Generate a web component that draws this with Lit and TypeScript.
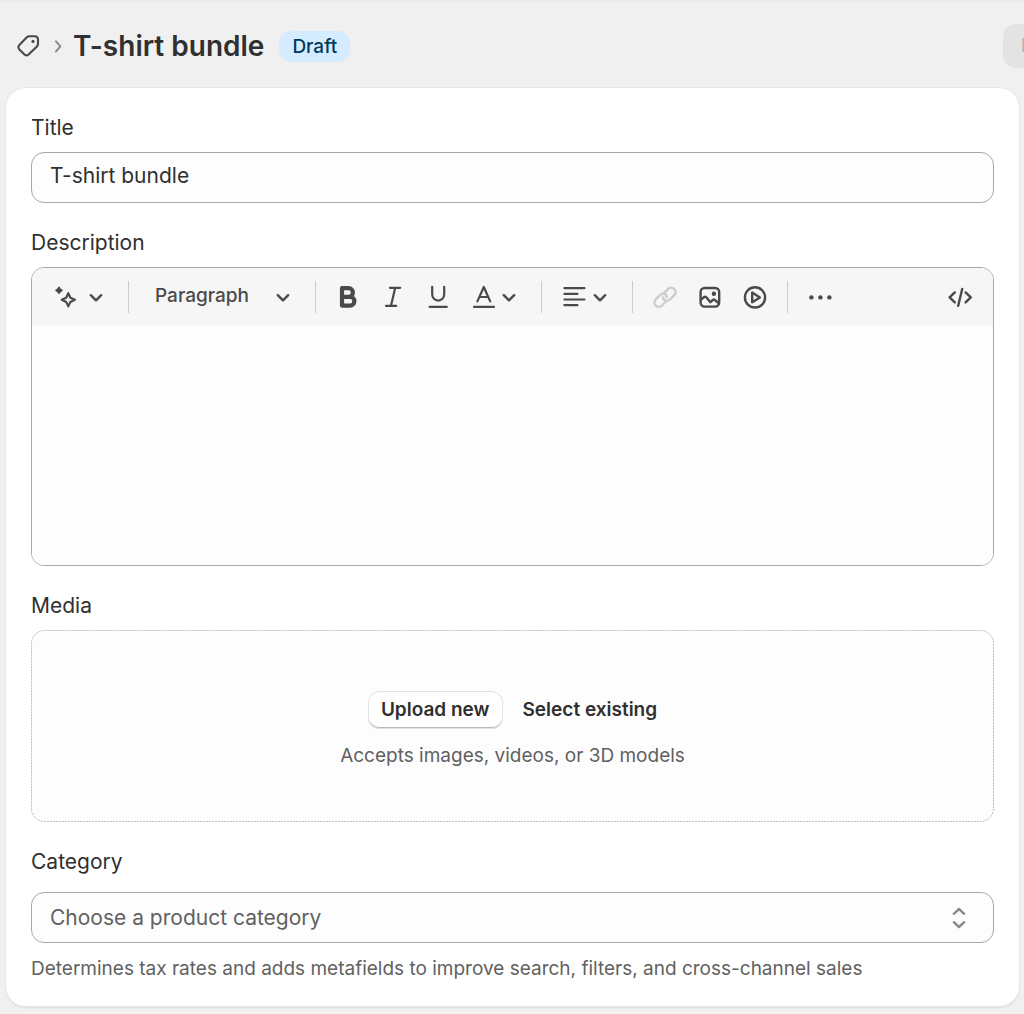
import { LitElement, html, css, svg } from "lit";
import { customElement, property } from "lit/decorators.js";

const icons: Record<string, unknown> = {
  sparkle: svg`
    <path d="M1 2.4L2.2 4.1L4 5.3L2.2 6.5L1 8.2L-0.2 6.5L-2 5.3L-0.2 4.1Z" fill="currentColor" stroke-width="1.6"/>
    <path d="M10.3 8.2L12.4 12.7L16.9 14.8L12.4 16.9L10.3 21.4L8.2 16.9L3.7 14.8L8.2 12.7Z" stroke-width="2.2"/>`,
  bold: svg`<path d="M6 3.2H12.6A4.3 4.3 0 0 1 12.6 11.8H6ZM6 11.8H14A4.4 4.4 0 0 1 14 20.6H6Z" stroke-width="4.2"/>`,
  italic: svg`<path d="M9 2.8H19.2M5 20.8H15.2M14.2 2.8L10 20.8" stroke-width="2.2"/>`,
  underline: svg`<path d="M6.2 1.8V9.6A6 6 0 0 0 18.2 9.6V1.8M3.6 21.8H20.8" stroke-width="2.2"/>`,
  color: svg`<path d="M6.4 16.4L12.8 2L19.2 16.4M8.6 12H17M3 21.8H23" stroke-width="2.2"/>`,
  align: svg`<path d="M2.4 3.2H22.4M2.4 8.9H15.4M2.4 14.5H22.4M2.4 20.2H15.4" stroke-width="2.2"/>`,
  link: svg`<path d="M10.2 8.9L15 4.1A4.3 4.3 0 0 1 21.3 10.2L17 14.5A4.4 4.4 0 0 1 10.8 14.5A2.6 2.6 0 0 1 10.2 12.4M13.8 15.7L9 20.5A4.3 4.3 0 0 1 2.7 14.4L7 10.1A4.4 4.4 0 0 1 13.2 10.1A2.6 2.6 0 0 1 13.8 12.2" stroke-width="2.4"/>`,
  image: svg`
    <rect x="2.6" y="3" width="18.6" height="18.6" rx="4"/>
    <circle cx="15.9" cy="8.8" r="2.2" fill="currentColor" stroke="none"/>
    <path d="M3 14.6L6.2 12Q7.3 11.2 8.3 12.3L12.4 17.2L14.8 15Q15.8 14.2 16.8 15L20.6 18"/>`,
  play: svg`
    <circle cx="12" cy="12.4" r="10.1"/>
    <path d="M9.2 7.6V17.2L16.9 12.4Z"/>`,
  dots: svg`<g fill="currentColor" stroke="none"><circle cx="3.4" cy="12.4" r="2.2"/><circle cx="12.4" cy="12.4" r="2.2"/><circle cx="21.4" cy="12.4" r="2.2"/></g>`,
  code: svg`<path d="M5.8 7.4L0.6 12.4L5.8 17.4M16.6 7.4L21.8 12.4L16.6 17.4M13.2 4L9.2 20.8" stroke-width="2.4"/>`,
};

const chevron = html`<svg class="chev" viewBox="0 0 16 24" aria-hidden="true"><path d="M2.8 10.2L8 15.4L13.2 10.2"/></svg>`;

@customElement("tool-button")
export class ToolButton extends LitElement {
  @property() icon = "";
  @property() label = "";
  @property({ type: Boolean }) menu = false;
  @property({ type: Boolean }) disabled = false;

  static styles = css`
    :host { display: block; flex: none; }
    .btn {
      display: flex; align-items: center; gap: 6px;
      padding: 0; border: 0; background: none; color: #4a4a4a; cursor: pointer;
    }
    .btn:disabled { color: #cccccc; cursor: default; }
    svg {
      display: block; width: 24px; height: 24px; overflow: visible;
      fill: none; stroke: currentColor; stroke-width: 2.4;
      stroke-linecap: round; stroke-linejoin: round;
    }
    .chev { width: 16px; }
  `;

  render() {
    return html`<button class="btn" type="button" aria-label=${this.label} ?disabled=${this.disabled}>
      <svg viewBox="0 0 24 24" aria-hidden="true">${icons[this.icon]}</svg>${this.menu ? chevron : ""}
    </button>`;
  }
}

@customElement("app-root")
export class AppRoot extends LitElement {
  static styles = css`
    :host {
      display: block; box-sizing: border-box; min-height: 100vh;
      padding: 0 5px 8px 6px; overflow: hidden;
      background: #f0f0f0; color: #303030;
      border-top: 2px solid #ebebeb;
      font: 400 21px/28px Inter, "Liberation Sans", sans-serif;
    }
    *, *::before { box-sizing: border-box; }
    button, input, select, textarea { font: inherit; color: inherit; margin: 0; }
    svg { display: block; flex: none; fill: none; stroke: currentColor; stroke-linecap: round; stroke-linejoin: round; }

    .head { display: flex; align-items: center; height: 86px; padding: 2px 0 0 10px; }
    .crumb { color: #4a4a4a; }
    .crumb svg { width: 24px; height: 24px; }
    .sep { width: 8px; height: 16px; margin: 0 11px 0 14px; color: #8a8a8a; }
    h1 { margin: 0; font-size: 28px; line-height: 36px; font-weight: 600; white-space: nowrap; }
    .badge {
      margin-left: 15px; padding: 0 13px; border-radius: 12px;
      background: #d5ebff; color: #003a5a;
      font-size: 19px; line-height: 31px; font-weight: 500;
    }
    .actions { flex: none; width: 16px; margin-left: auto; }
    .action {
      display: block; height: 44px; padding: 0 18px; border: 0; border-radius: 13px; white-space: nowrap;
      background: #e3e3e3; color: #b5b5b5; font-size: 19px; font-weight: 600;
    }

    .card {
      display: flex; flex-direction: column; gap: 26px;
      padding: 26px 25px 23px; border-radius: 20px; background: #fff;
      box-shadow: 0 0 0 1px #e6e6e6, 0 2px 2px #dcdcdc;
    }
    .field { display: flex; flex-direction: column; gap: 10px; }
    .box { width: 100%; border: 1px solid #a8a8a8; border-radius: 13px; background: #fdfdfd; }
    .text { height: 51px; padding: 0 18px 4px; }

    .editor { display: flex; flex-direction: column; overflow: hidden; }
    .bar { display: flex; align-items: center; height: 58px; background: #f6f6f6; color: #4a4a4a; }
    .group { display: flex; align-items: center; gap: 21px; padding: 0 24px 0 20px; }
    .group.first { padding-left: 26px; }
    .group + .group { border-left: 1px solid #cccccc; height: 32px; }
    .group.end, .group.last { padding-right: 20px; }
    .group + .last { margin-left: auto; border-left: 0; }
    .pick { position: relative; display: flex; align-items: center; margin-left: 6px; }
    .pick select {
      appearance: none; border: 0; background: none; padding: 0 42px 2px 0;
      font-size: 19px; line-height: 28px; font-weight: 500;
    }
    .pick svg { position: absolute; right: 0; width: 16px; height: 24px; stroke-width: 2.4; pointer-events: none; }
    textarea { display: block; width: 100%; height: 239px; padding: 16px 18px; border: 0; resize: none; background: #fdfdfd; outline: none; }

    .drop {
      position: relative; display: flex; flex-direction: column; align-items: center;
      padding: 61px 20px 52px; gap: 13px; border-radius: 13px; background: #fdfdfd;
    }
    .outline { position: absolute; inset: 0; width: 100%; height: 100%; color: #bcbcbc; }
    .outline rect { width: calc(100% - 1px); height: calc(100% - 1px); }
    .row { display: flex; align-items: center; gap: 20px; }
    .btn { height: 38px; padding: 0; border: 0; border-radius: 12px; background: none; font-size: 19px; font-weight: 600; }
    .raised { padding: 0 13px; background: #fff; box-shadow: inset 0 0 0 1px #e3e3e3, inset 0 -2px 0 #b8b8b8; }
    .hint { margin: 0; color: #616161; font-size: 19px; line-height: 28px; }

    .wide { gap: 16px; }
    .combo { position: relative; }
    .combo select { display: block; appearance: none; height: 51px; padding: 0 60px 0 18px; color: #616161; }
    .combo svg { position: absolute; right: 27px; top: 14px; width: 16px; height: 24px; color: #8a8a8a; stroke-width: 2.4; pointer-events: none; }
    .note { margin-top: -4px; }
  `;

  render() {
    return html`
      <header class="head">
        <a class="crumb" href="#products" aria-label="Products">
          <svg viewBox="0 0 24 24" stroke-width="2.1" aria-hidden="true">
            <path d="M13.4 2.2H18.6Q22 2.2 22 5.6V9.6Q22 11.4 20.7 12.7L12.6 20.5Q10.4 22.4 8.2 20.3L3.4 15.4Q1.4 13.1 3.4 10.9L10.8 3.3Q11.9 2.2 13.4 2.2Z"/>
            <circle cx="17" cy="7.4" r="1.6" fill="currentColor" stroke="none"/>
          </svg>
        </a>
        <svg class="sep" viewBox="0 0 8 16" stroke-width="2" aria-hidden="true"><path d="M2 3.4L6.4 8.4L2 13.4"/></svg>
        <h1>T-shirt bundle</h1>
        <span class="badge">Draft</span>
        <div class="actions"><button class="action" type="button" disabled>Duplicate</button></div>
      </header>

      <main class="card">
        <div class="field">
          <label for="title">Title</label>
          <input class="box text" id="title" type="text" .value=${"T-shirt bundle"} />
        </div>

        <div class="field">
          <label for="description">Description</label>
          <div class="box editor">
            <div class="bar" role="toolbar" aria-label="Formatting">
              <div class="group first"><tool-button icon="sparkle" label="Generate text" menu></tool-button></div>
              <div class="group">
                <div class="pick">
                  <select aria-label="Text style"><option>Paragraph</option></select>
                  <svg viewBox="0 0 16 24" aria-hidden="true"><path d="M2.8 10.2L8 15.4L13.2 10.2"/></svg>
                </div>
              </div>
              <div class="group">
                <tool-button icon="bold" label="Bold"></tool-button>
                <tool-button icon="italic" label="Italic"></tool-button>
                <tool-button icon="underline" label="Underline"></tool-button>
                <tool-button icon="color" label="Text color" menu></tool-button>
              </div>
              <div class="group"><tool-button icon="align" label="Alignment" menu></tool-button></div>
              <div class="group end">
                <tool-button icon="link" label="Insert link" disabled></tool-button>
                <tool-button icon="image" label="Insert image"></tool-button>
                <tool-button icon="play" label="Insert video"></tool-button>
              </div>
              <div class="group"><tool-button icon="dots" label="More"></tool-button></div>
              <div class="group last"><tool-button icon="code" label="Show HTML"></tool-button></div>
            </div>
            <textarea id="description"></textarea>
          </div>
        </div>

        <div class="field">
          <span id="media">Media</span>
          <div class="drop" role="group" aria-labelledby="media">
            <svg class="outline" aria-hidden="true"><rect x="0.5" y="0.5" rx="13" stroke-dasharray="2 1" stroke-linecap="butt"/></svg>
            <div class="row">
              <button class="btn raised" type="button">Upload new</button>
              <button class="btn" type="button">Select existing</button>
            </div>
            <p class="hint">Accepts images, videos, or 3D models</p>
          </div>
        </div>

        <div class="field wide">
          <label for="category">Category</label>
          <div class="combo">
            <select class="box" id="category" aria-describedby="category-help"><option>Choose a product category</option></select>
            <svg viewBox="0 0 16 24" aria-hidden="true"><path d="M2.8 7.8L8 3L13.2 7.8M2.8 16.2L8 21L13.2 16.2"/></svg>
          </div>
          <p class="hint note" id="category-help">Determines tax rates and adds metafields to improve search, filters, and cross-channel sales</p>
        </div>
      </main>
    `;
  }
}
